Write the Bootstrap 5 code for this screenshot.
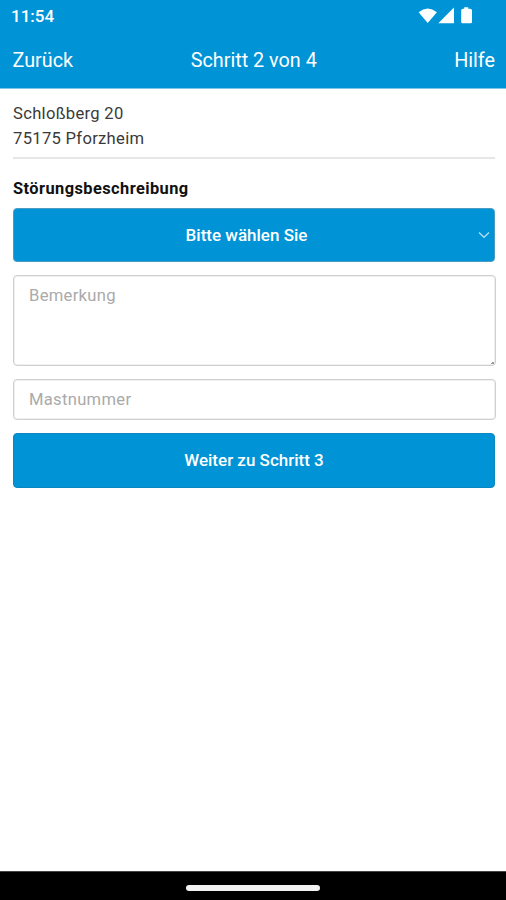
<!DOCTYPE html>
<html lang="de">
<head>
<meta charset="utf-8">
<meta name="viewport" content="width=device-width, initial-scale=1">
<title>Störungsmeldung</title>
<link href="https://cdn.jsdelivr.net/npm/bootstrap@5.3.0/dist/css/bootstrap.min.css" rel="stylesheet">
<style>
:root { --brand: #0093d6; }
body { font-family: Roboto, "Liberation Sans", sans-serif; font-size: 16.6px; color: #3a3a3a; letter-spacing: .3px; }
.app-head { background: var(--brand); height: 89px; border-bottom: 1px solid #7fc6e9; }
.status { height: 32px; padding: 1px 32px 0 11px; font-size: 17px; font-weight: 500; letter-spacing: 0; }
.status svg { margin-top: -2px; }
.topbar { height: 57px; padding: 0 11px 0 12.5px; font-size: 19.8px; letter-spacing: 0; }
.topbar a { color: inherit; flex: 1 0 0; }
.content { padding: 13px 11px 0 13px; }
.address { line-height: 24.5px; height: 57px; border-bottom: 2px solid #e6e6e6; margin-bottom: 18px; }
.field-label { color: #111; font-size: 16.4px; line-height: 24px; margin-bottom: 7px; letter-spacing: .43px; height: 24px; }
.btn-brand { background: var(--brand); height: 54px; color: #fff; border: 1px solid #4a9cc4; border-radius: 4px; font-size: 17px; font-weight: 500; margin-bottom: 13px; letter-spacing: 0; }
.btn-brand:hover { background: #0086c4; color: #fff; }
.btn-select-label { padding: 2px 0 0 1px; }
.btn-next { height: 55px; border-color: #0c86c0; }
.field { border: 1px solid #cfcfcf; box-shadow: inset 0 0 0 1px #f0f0f0; border-radius: 4px; padding: 8px 15px 6px; font-size: 16.6px; letter-spacing: .3px; width: 483px; }
.field::placeholder { color: #aaa; }
.note-wrap { margin-bottom: 13px; }
.field-note { height: 91px; resize: none; display: block; }
.field-mast { height: 41px; padding: 6px 15px; margin-bottom: 13px; }
.note-wrap::after { content: ""; position: absolute; right: 1px; bottom: 2px; width: 3px; height: 3px; background: linear-gradient(135deg, transparent 50%, #999 50%); }
.home-bar { background: #000; height: 29px; padding-top: 4px; border-top: 1px solid #444; }
.home-pill { width: 134px; height: 6px; background: #f2f2f2; }
</style>
<script src="https://cdn.jsdelivr.net/npm/bootstrap@5.3.0/dist/js/bootstrap.bundle.min.js"></script>
</head>
<body class="d-flex flex-column vh-100 bg-white overflow-hidden">
<header class="app-head text-white flex-shrink-0">
  <div class="status d-flex align-items-center justify-content-between">
    <span>11:54</span>
    <svg width="56" height="20" viewBox="0 0 56 20" fill="#fff" aria-hidden="true">
      <path d="M.6 6.200Q9.700-1.200 18.900 6.200L9.700 17Z"/>
      <path d="M20.300 17.300 36 1.600V17.300Z"/>
      <path d="M46.200 1.300h4v1.400h1.900q1.900 0 1.900 1.900v11.400q0 1.300-1.300 1.300h-8.200q-1.300 0-1.300-1.300v-11.400q0-1.900 1.900-1.900h1.100z"/>
    </svg>
  </div>
  <nav class="topbar d-flex align-items-center">
    <a href="#" class="text-decoration-none">Zurück</a>
    <span>Schritt 2 von 4</span>
    <a href="#" class="text-decoration-none text-end">Hilfe</a>
  </nav>
</header>
<main class="content flex-grow-1">
  <div class="address">Schloßberg 20<br>75175 Pforzheim</div>
  <div class="field-label fw-bold">Störungsbeschreibung</div>
  <button type="button" class="btn btn-brand w-100 d-flex align-items-center p-0">
    <span class="btn-select-label flex-grow-1">Bitte wählen Sie</span>
    <svg class="me-1" width="12" height="8" viewBox="0 0 12 8" fill="none" stroke="#b5def3" stroke-width="1.3" aria-hidden="true"><path d="M1 1.500 6 6.300 11 1.500"/></svg>
  </button>
  <div class="note-wrap position-relative">
    <textarea class="form-control field field-note" placeholder="Bemerkung"></textarea>
  </div>
  <input type="text" class="form-control field field-mast" placeholder="Mastnummer">
  <button type="button" class="btn btn-brand btn-next w-100">Weiter zu Schritt 3</button>
</main>
<footer class="home-bar d-flex align-items-center justify-content-center flex-shrink-0"><div class="home-pill rounded-pill"></div></footer>
</body>
</html>
